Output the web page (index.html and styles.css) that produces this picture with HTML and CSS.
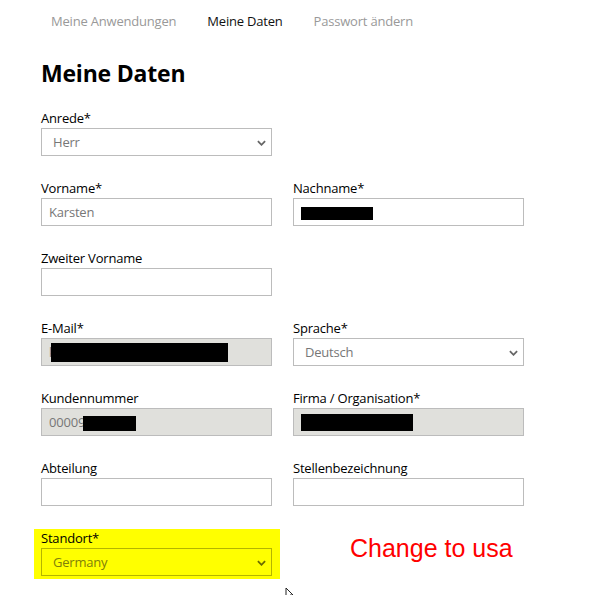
FILE: index.html
```html
<!DOCTYPE html>
<html lang="de">

<head>
    <meta charset="UTF-8">
    <meta name="viewport" content="width=device-width, initial-scale=1.0">
    <title>Meine Daten</title>
    <link rel="stylesheet" href="styles.css">
</head>

<body>
    <nav class="tabs">
        <a href="#">Meine Anwendungen</a>
        <a href="#" class="active">Meine Daten</a>
        <a href="#">Passwort ändern</a>
    </nav>

    <div class="container">
        <h1>Meine Daten</h1>

        <form class="profile-form">
            <div class="field">
                <label for="anrede">Anrede*</label>
                <div class="select-wrap">
                    <select id="anrede">
                        <option>Herr</option>
                        <option>Frau</option>
                    </select>
                    <svg class="chevron" viewBox="0 0 10 6"><path d="M1 1 L5 5 L9 1" /></svg>
                </div>
            </div>
            <div class="field"></div>

            <div class="field">
                <label for="vorname">Vorname*</label>
                <input type="text" id="vorname" value="Karsten">
            </div>
            <div class="field">
                <label for="nachname">Nachname*</label>
                <div class="control">
                    <input type="text" id="nachname">
                    <span class="redact redact-nachname"></span>
                </div>
            </div>

            <div class="field">
                <label for="zweiter">Zweiter Vorname</label>
                <input type="text" id="zweiter">
            </div>
            <div class="field"></div>

            <div class="field">
                <label for="email">E-Mail*</label>
                <div class="control">
                    <input type="text" id="email" class="readonly" value="k" readonly>
                    <span class="redact redact-email"></span>
                </div>
            </div>
            <div class="field">
                <label for="sprache">Sprache*</label>
                <div class="select-wrap">
                    <select id="sprache">
                        <option>Deutsch</option>
                        <option>English</option>
                    </select>
                    <svg class="chevron" viewBox="0 0 10 6"><path d="M1 1 L5 5 L9 1" /></svg>
                </div>
            </div>

            <div class="field">
                <label for="kunde">Kundennummer</label>
                <div class="control">
                    <input type="text" id="kunde" class="readonly" value="00009" readonly>
                    <span class="redact redact-kunde"></span>
                </div>
            </div>
            <div class="field">
                <label for="firma">Firma / Organisation*</label>
                <div class="control">
                    <input type="text" id="firma" class="readonly" readonly>
                    <span class="redact redact-firma"></span>
                </div>
            </div>

            <div class="field">
                <label for="abteilung">Abteilung</label>
                <input type="text" id="abteilung">
            </div>
            <div class="field">
                <label for="stelle">Stellenbezeichnung</label>
                <input type="text" id="stelle">
            </div>

            <div class="field highlight">
                <label for="standort">Standort*</label>
                <div class="select-wrap">
                    <select id="standort">
                        <option>Germany</option>
                        <option>USA</option>
                    </select>
                    <svg class="chevron" viewBox="0 0 10 6"><path d="M1 1 L5 5 L9 1" /></svg>
                </div>
            </div>
            <div class="field note">Change to usa</div>
        </form>
    </div>

    <!-- mouse pointer in screenshot -->
    <svg class="cursor" viewBox="0 0 12 10">
        <path d="M1 1 L1 9 M1 1 L8 8 L5 8" />
    </svg>
</body>

</html>
```

FILE: styles.css
```css
:root {
    --text: #111;
    --muted: #999;
    --border: #bcbcbc;
    --readonly: #e0e0dc;
}

* {
    margin: 0;
    padding: 0;
    box-sizing: border-box;
    font-family: 'Open Sans', 'Noto Sans', Arial, sans-serif;
}

body {
    background-color: #fff;
    color: var(--text);
    width: 605px;
    height: 595px;
    overflow: hidden;
    position: relative;
}

.tabs {
    display: flex;
    gap: 31px;
    padding-left: 51px;
    height: 42px;
    align-items: center;
}

.tabs a {
    font-size: 13px;
    color: var(--muted);
    text-decoration: none;
    letter-spacing: -0.2px;
}

.tabs a.active {
    color: var(--text);
}

.container {
    padding-left: 41px;
}

h1 {
    font-size: 23px;
    font-weight: 700;
    line-height: 30px;
    margin-top: 16px;
    margin-bottom: 22px;
    letter-spacing: -0.2px;
    color: #000;
}

.profile-form {
    display: grid;
    grid-template-columns: 231px 231px;
    column-gap: 21px;
    row-gap: 24px;
}

.field label {
    display: block;
    font-size: 13px;
    line-height: 16px;
    margin-bottom: 2px;
    letter-spacing: -0.2px;
    color: #000;
}

.field input,
.field select {
    display: block;
    width: 231px;
    height: 28px;
    border: 1px solid var(--border);
    background-color: #fff;
    font-size: 13px;
    color: #777;
    padding: 0 7px;
    outline: none;
    letter-spacing: -0.2px;
}

.field select {
    appearance: none;
    -webkit-appearance: none;
    padding-left: 11px;
    border-radius: 0;
}

.field input.readonly {
    background-color: var(--readonly);
}

.control,
.select-wrap {
    position: relative;
}

.chevron {
    position: absolute;
    right: 6px;
    top: 12px;
    width: 9px;
    height: 6px;
    fill: none;
    stroke: #666;
    stroke-width: 2;
}

.redact {
    position: absolute;
    background-color: #000;
}

.redact-nachname {
    left: 8px;
    top: 9px;
    width: 72px;
    height: 13px;
}

.redact-email {
    left: 10px;
    top: 5px;
    width: 177px;
    height: 19px;
}

.redact-kunde {
    left: 42px;
    top: 8px;
    width: 53px;
    height: 15px;
}

.redact-firma {
    left: 8px;
    top: 6px;
    width: 112px;
    height: 17px;
}

/* Markierung */
.highlight {
    background-color: #ffff00;
    margin: -1px -8px -3px -7px;
    padding: 1px 8px 3px 7px;
}

.highlight select {
    background-color: transparent;
    border-color: #b5b500;
    color: #80800a;
}

.highlight .chevron {
    stroke: #6b6b00;
}

.note {
    font-family: 'Liberation Sans', Arial, sans-serif;
    font-size: 25px;
    color: #ff0000;
    padding-left: 57px;
    padding-top: 4px;
}

.cursor {
    position: absolute;
    left: 285px;
    top: 587px;
    width: 12px;
    height: 10px;
    fill: none;
    stroke: #222;
    stroke-width: 1;
}
```
